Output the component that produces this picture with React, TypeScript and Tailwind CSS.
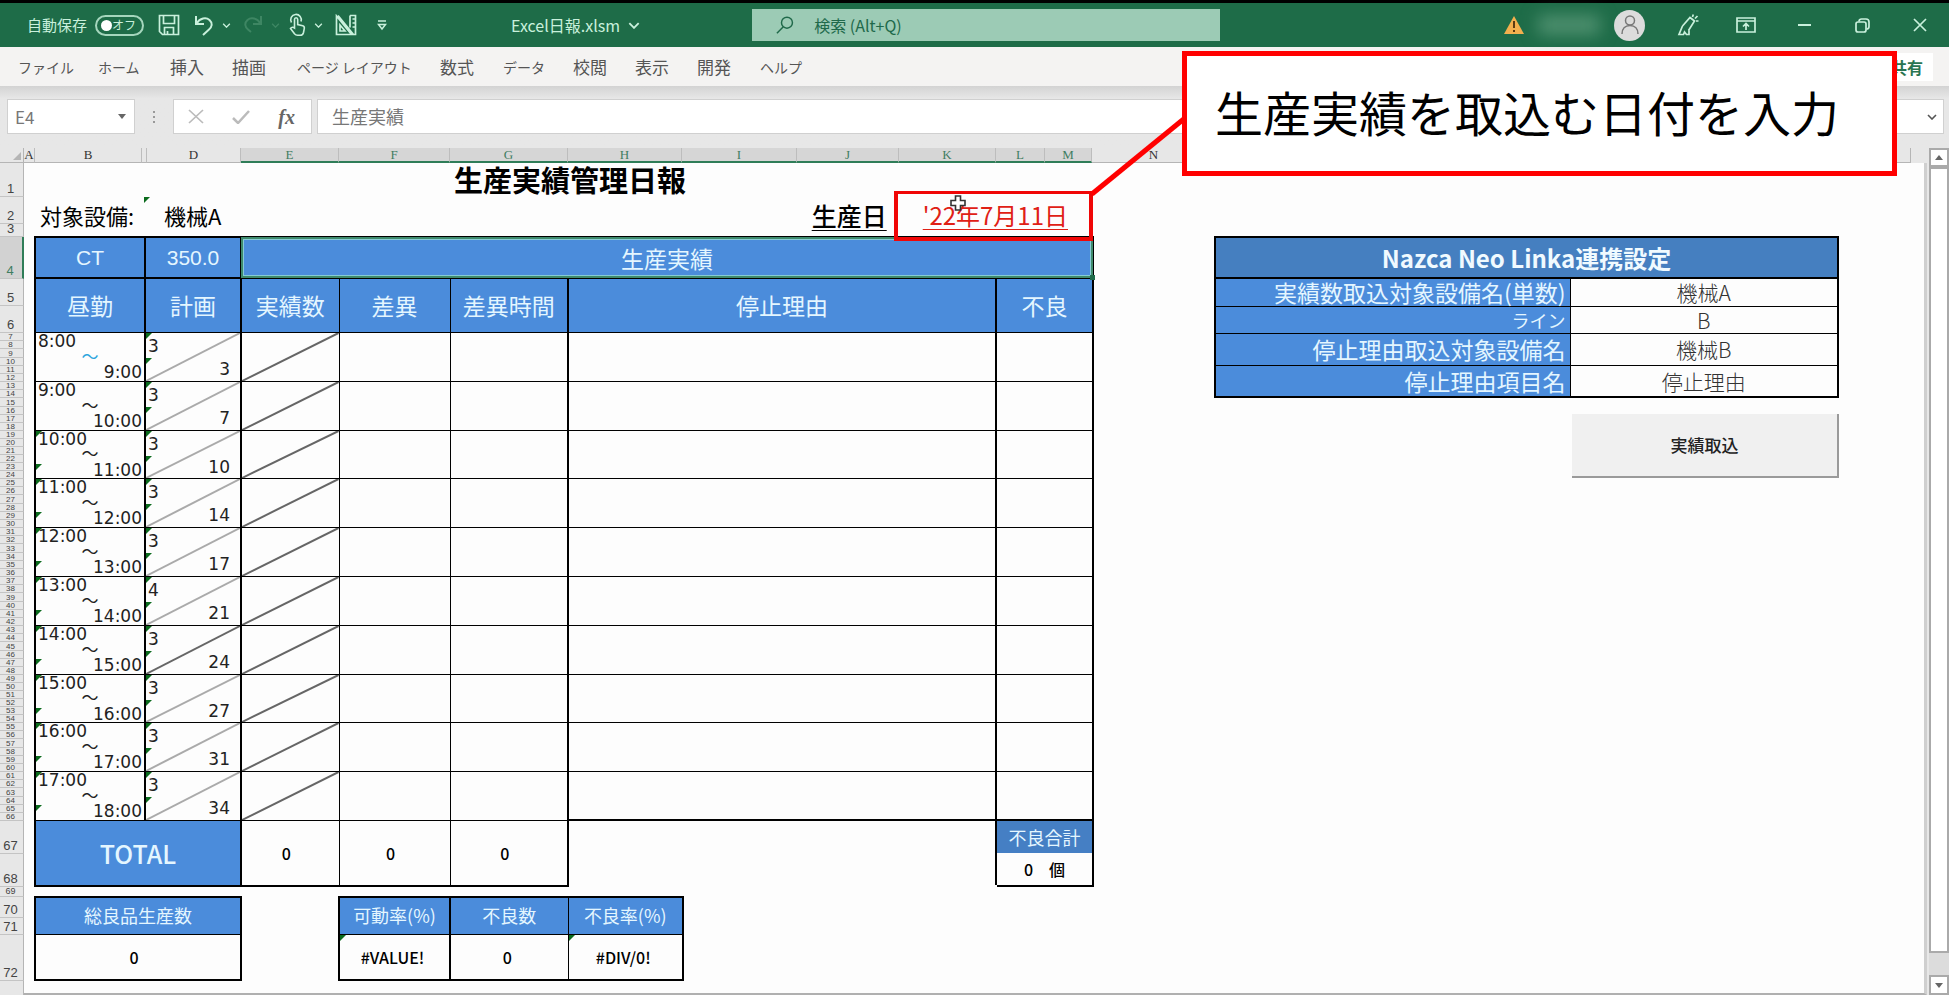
import { useState, type ReactNode } from "react"
import clsx from "clsx"

const TABS = [
  { label: "ファイル", width: "w-20", kana: true },
  { label: "ホーム", width: "w-[72px]", kana: true },
  { label: "挿入", width: "w-[62px]" },
  { label: "描画", width: "w-[65px]" },
  { label: "ページ レイアウト", width: "w-[143px]", kana: true },
  { label: "数式", width: "w-[63px]" },
  { label: "データ", width: "w-[70px]", kana: true },
  { label: "校閲", width: "w-[62px]" },
  { label: "表示", width: "w-[62px]" },
  { label: "開発", width: "w-[63px]" },
  { label: "ヘルプ", width: "w-[60px]", kana: true },
]

const COLUMNS = [
  { name: "A", width: "w-[11px]" },
  { name: "B", width: "w-[107px]" },
  { name: "", width: "w-[5px]" },
  { name: "D", width: "w-[94px]" },
  { name: "E", width: "w-[98px]", active: true },
  { name: "F", width: "w-[111px]", active: true },
  { name: "G", width: "w-[118px]", active: true },
  { name: "H", width: "w-[114px]", active: true },
  { name: "I", width: "w-[115px]", active: true },
  { name: "J", width: "w-[102px]", active: true },
  { name: "K", width: "w-[97px]", active: true },
  { name: "L", width: "w-[49px]", active: true },
  { name: "M", width: "w-[47px]", active: true },
  { name: "N", width: "w-[124px]" },
]

const HOURS = [
  { from: "8:00", to: "9:00", plan: 3, sum: 3, height: "h-[49px]" },
  { from: "9:00", to: "10:00", plan: 3, sum: 7, height: "h-[49px]" },
  { from: "10:00", to: "11:00", plan: 3, sum: 10, height: "h-12" },
  { from: "11:00", to: "12:00", plan: 3, sum: 14, height: "h-[49px]" },
  { from: "12:00", to: "13:00", plan: 3, sum: 17, height: "h-[49px]" },
  { from: "13:00", to: "14:00", plan: 4, sum: 21, height: "h-[49px]" },
  { from: "14:00", to: "15:00", plan: 3, sum: 24, height: "h-[49px]" },
  { from: "15:00", to: "16:00", plan: 3, sum: 27, height: "h-12" },
  { from: "16:00", to: "17:00", plan: 3, sum: 31, height: "h-[49px]" },
  { from: "17:00", to: "18:00", plan: 3, sum: 34, height: "h-[49px]" },
]

const SETTINGS = [
  { label: "実績数取込対象設備名(単数)", value: "機械A", height: "h-7" },
  { label: "ライン", value: "B", height: "h-[27px]", small: true },
  { label: "停止理由取込対象設備名", value: "機械B", height: "h-8" },
  { label: "停止理由項目名", value: "停止理由", height: "h-8" },
]

function Chevron({ className = "h-[5px] w-[9px]" }: { className?: string }) {
  return (
    <svg viewBox="0 0 10 6" className={className} fill="none" stroke="currentColor" strokeWidth="1.6">
      <path d="M1 1l4 4 4-4" />
    </svg>
  )
}

// Green corner that marks a formula warning
function Mark({ className }: { className: string }) {
  return (
    <svg viewBox="0 0 6 6" className={clsx("absolute size-[6px]", className)}>
      <path d="M0 0h6L0 6z" fill="#0b6b1d" />
    </svg>
  )
}

function Slash({ color }: { color: string }) {
  return (
    <svg className="absolute inset-0 size-full" viewBox="0 0 100 50" preserveAspectRatio="none">
      <path d="M0 50L100 0" stroke={color} strokeWidth="2" vectorEffect="non-scaling-stroke" />
    </svg>
  )
}

function TitleBar() {
  const [autosave, setAutosave] = useState(false)
  return (
    <header className="flex h-[47px] items-center border-t-[3px] border-black bg-[#1e6c48] text-[#c9f0dc]">
      <div className="flex w-[752px] shrink-0 items-center pl-[27px]">
        <label className="flex items-center gap-2 text-[15px]">
          自動保存
          <input type="checkbox" className="sr-only" checked={autosave} onChange={() => setAutosave(!autosave)} />
          <span className="flex h-[21px] w-[49px] items-center justify-between rounded-full border-2 border-[#a5d6bd] pr-1.5 pl-1 text-[12px]">
            <span className="size-[11px] rounded-full bg-white" />
            オフ
          </span>
        </label>
        <button aria-label="保存" className="ml-3.5">
          <svg viewBox="0 0 22 22" className="size-[22px]" fill="none" stroke="currentColor" strokeWidth="1.7">
            <path d="M1.5 1.5h19v19h-16l-3-3zM5.5 1.5v8h11v-8M6.5 20.5v-7h9v7M9.5 17v3.500" />
          </svg>
        </button>
        <button aria-label="元に戻す" className="ml-3.5 flex items-center gap-2">
          <svg viewBox="0 0 20 22" className="h-[22px] w-5" fill="none" stroke="currentColor" strokeWidth="2">
            <path d="M2 2v8h8M2.5 9.5C6 4 12 3 15.5 6c3.500 3.200 2.500 7-.5 9.500L9 21" />
          </svg>
          <Chevron />
        </button>
        <button aria-label="やり直し" className="ml-3 flex items-center gap-2 text-[#3e8663]">
          <svg viewBox="0 0 20 22" className="h-[22px] w-5" fill="none" stroke="currentColor" strokeWidth="2">
            <path d="M18 2v8h-8M17.5 9.5C14 4 8 3 4.5 6 1 9.2 2 13 5 15.5L8 18" />
          </svg>
          <Chevron />
        </button>
        <button aria-label="タッチ" className="ml-2 flex items-center gap-2">
          <svg viewBox="0 0 18 24" className="h-6 w-[18px]" fill="none" stroke="currentColor" strokeWidth="1.6">
            <path d="M3.5 9.5a5.300 5.300 0 1 1 9.500-1" />
            <path d="M6.5 15V6.5c0-2.300 3.200-2.300 3.200 0v5l5 1.200c1.300.4 1.800 1.300 1.600 2.600l-.8 4.200c-.4 1.800-1.500 2.800-3.300 2.800H9.500c-1.300 0-2.200-.5-3-1.500l-4-5.300c1-1.500 2.500-1.500 4-.5z" />
          </svg>
          <Chevron />
        </button>
        <button aria-label="デザイン モード" className="ml-3">
          <svg viewBox="0 0 22 22" className="size-[22px]" fill="none" stroke="currentColor" strokeWidth="1.7">
            <path d="M1.5 2v18.500h15zM5 11v6h5zM15 1.500h5.500v19h-2L3 1.500M15 1.500v12M17.500 5h3M17.500 9h3M17.500 13h3" />
          </svg>
        </button>
        <button aria-label="クイック アクセス" className="ml-5">
          <svg viewBox="0 0 10 11" className="h-[11px] w-[10px]" fill="none" stroke="currentColor" strokeWidth="1.5">
            <path d="M1 1h8M1.5 4.500h7L5 9z" />
          </svg>
        </button>
        <button className="mr-[112px] ml-auto flex items-center gap-2 text-[16px]">
          Excel日報.xlsm
          <Chevron className="h-[7px] w-3" />
        </button>
      </div>
      <label className="flex h-8 w-[468px] items-center bg-[#9ccbb5] pl-6 text-[#20694a]">
        <svg viewBox="0 0 20 20" className="mr-5 size-5" fill="none" stroke="currentColor" strokeWidth="1.6">
          <circle cx="12" cy="7.5" r="6" />
          <path d="M8 12l-7 7" />
        </svg>
        <input aria-label="検索" placeholder="検索 (Alt+Q)" className="w-full bg-transparent text-[16px] outline-none placeholder:text-[#20694a]" />
      </label>
      <div className="ml-auto flex shrink-0 items-center">
        <svg viewBox="0 0 20 18" className="h-[18px] w-5">
          <path d="M10 0l10 18H0z" fill="#f3b04e" />
          <path d="M10 5v7M10 14v2" stroke="#5b3b12" strokeWidth="2" />
        </svg>
        <span className="mx-3.5 h-5 w-[62px] bg-[#4d8f6e] blur-sm" />
        <button aria-label="アカウント" className="mr-3.5 flex size-[31px] items-center justify-center rounded-full bg-[#dcdcdc]">
          <svg viewBox="0 0 20 22" className="h-[22px] w-5" fill="none" stroke="#777" strokeWidth="1.5">
            <circle cx="10" cy="6.5" r="4.5" />
            <path d="M2 20c0-5 3-8.500 8-8.500s8 3.500 8 8.500" />
          </svg>
        </button>
        <button aria-label="描画" className="flex w-[58px] justify-center">
          <svg viewBox="0 0 22 22" className="size-[22px]" fill="none" stroke="currentColor" strokeWidth="1.7">
            <path d="M5.5 12L13 3.500l4.500 3.500-6 9.500M5.500 12L2 20.500h4.500l1-2.500 2 2.500h2.500V16.500M15.500 3l.8-2.500M18 4.500L20.500 2M19 7h2.500" />
          </svg>
        </button>
        <button aria-label="リボンの表示" className="flex w-[58px] justify-center">
          <svg viewBox="0 0 20 16" className="h-4 w-5" fill="none" stroke="currentColor" strokeWidth="1.7">
            <path d="M1 1h18v14H1zM1 4h18M10 13V7M7 9.500L10 6.500l3 3" />
          </svg>
        </button>
        <button aria-label="最小化" className="flex w-[58px] justify-center">
          <span className="h-0.5 w-[13px] bg-current" />
        </button>
        <button aria-label="元のサイズ" className="flex w-[58px] justify-center">
          <svg viewBox="0 0 15 15" className="size-[15px]" fill="none" stroke="currentColor" strokeWidth="1.7">
            <rect x="1" y="4" width="10" height="10" rx="2" />
            <path d="M4 3.5C4 2 5 1 6.5 1H11c2 0 3 1 3 3v4.500c0 1.500-1 2.500-2.500 2.500" />
          </svg>
        </button>
        <button aria-label="閉じる" className="flex w-[58px] justify-center">
          <svg viewBox="0 0 14 14" className="size-3.5" fill="none" stroke="currentColor" strokeWidth="1.7">
            <path d="M1 1l12 12M13 1L1 13" />
          </svg>
        </button>
      </div>
    </header>
  )
}

function Ribbon() {
  return (
    <nav className="flex h-[39px] items-center bg-[#f4f3f2] pl-[18px] text-[#555]">
      {TABS.map((tab) => (
        <button
          key={tab.label}
          className={clsx("shrink-0 text-left leading-6 whitespace-nowrap", tab.width, tab.kana ? "text-[14px]" : "text-[17px]")}
        >
          {tab.label}
        </button>
      ))}
      <button className="mr-4 ml-auto h-7 bg-white px-2.5 text-[16px] font-bold text-[#2a7552]">共有</button>
    </nav>
  )
}

function FormulaBar() {
  return (
    <div className="flex h-[62px] items-start bg-linear-to-b from-[#d3d3d3] to-[#e7e7e7] to-20% pt-[13px] pr-[5px] pl-[7px] text-[#777]">
      <div className="flex h-[35px] w-32 items-center border border-[#d0d0d0] bg-white pr-2 pl-[7px]">
        <input aria-label="名前ボックス" defaultValue="E4" className="w-full min-w-0 text-[17px] outline-none" />
        <svg viewBox="0 0 8 5" className="h-[5px] w-2 shrink-0" fill="#666">
          <path d="M0 0h8L4 5z" />
        </svg>
      </div>
      <div className="mx-[18px] flex h-[35px] w-0.5 flex-col justify-center gap-[3px]">
        <span className="h-0.5 bg-[#999]" />
        <span className="h-0.5 bg-[#999]" />
        <span className="h-0.5 bg-[#999]" />
      </div>
      <div className="flex h-[35px] w-[139px] items-center justify-between border border-[#d0d0d0] bg-white pr-4 pl-3.5">
        <button aria-label="キャンセル">
          <svg viewBox="0 0 16 15" className="h-[15px] w-4" fill="none" stroke="#bbb" strokeWidth="1.7">
            <path d="M1 1l14 13M15 1L1 14" />
          </svg>
        </button>
        <button aria-label="入力">
          <svg viewBox="0 0 18 14" className="h-3.5 w-[18px]" fill="none" stroke="#bbb" strokeWidth="2.5">
            <path d="M1 8l5 5L17 1" />
          </svg>
        </button>
        <button className="font-['Liberation_Serif',serif] text-[20px] leading-6 font-bold text-[#666] italic">fx</button>
      </div>
      <div className="ml-[5px] flex h-[35px] flex-1 items-center border border-[#d0d0d0] bg-white pr-1.5 pl-3.5">
        <input aria-label="数式バー" defaultValue="生産実績" className="flex-1 text-[18px] outline-none" />
        <Chevron className="h-[6px] w-[10px] text-[#555]" />
      </div>
    </div>
  )
}

function ColumnHeads() {
  return (
    <div className="flex h-[15px] text-[13px] leading-[14px] text-[#333]">
      {COLUMNS.map((col, i) => (
        <div
          key={i}
          className={clsx(
            "shrink-0 border-r border-r-[#bdbdbd] text-center font-['Liberation_Serif',serif]",
            col.width,
            col.active ? "border-b-2 border-b-[#2f7d58] bg-[#d6d6d6] text-[#3f7d62]" : "border-b border-b-[#b5b5b5]",
          )}
        >
          {col.name}
        </div>
      ))}
      <div className="mr-4 flex-1 border-r border-b border-[#b5b5b5]" />
    </div>
  )
}

function RowHead({ n, className, active }: { n: number; className: string; active?: boolean }) {
  return (
    <div
      className={clsx(
        "flex items-end justify-center border-b border-b-[#c4c4c4] pr-0.5",
        active ? "border-r-2 border-r-[#2f7d58] bg-[#d2d2d2] text-[#3f7d62]" : "border-r border-r-[#b5b5b5] text-[#444]",
        className,
      )}
    >
      {n}
    </div>
  )
}

function RowHeads() {
  return (
    <div className="flex w-6 shrink-0 flex-col bg-[#e7e7e7] font-['Liberation_Sans',sans-serif] text-[13px] leading-[14px]">
      <div className="flex h-[15px] items-end justify-end border-r border-b border-[#b5b5b5] p-0.5">
        <svg viewBox="0 0 8 8" className="size-2" fill="#b5b5b5">
          <path d="M8 0v8H0z" />
        </svg>
      </div>
      <RowHead n={1} className="h-[34px]" />
      <RowHead n={2} className="h-[27px]" />
      <RowHead n={3} className="h-[13px]" />
      <RowHead n={4} className="h-[42px]" active />
      <RowHead n={5} className="h-[27px]" />
      <RowHead n={6} className="h-[27px]" />
      {HOURS.map((hour, g) => (
        <div key={hour.from} className={clsx("flex flex-col text-[8px] leading-[7px]", hour.height)}>
          {[0, 1, 2, 3, 4, 5].map((i) => (
            <RowHead key={i} n={7 + g * 6 + i} className="flex-1" />
          ))}
        </div>
      ))}
      <RowHead n={67} className="h-[33px]" />
      <RowHead n={68} className="h-[33px]" />
      <RowHead n={69} className="h-[10px] text-[9px] leading-[9px]" />
      <RowHead n={70} className="h-[21px]" />
      <RowHead n={71} className="h-[17px]" />
      <RowHead n={72} className="h-[46px]" />
      <div className="flex-1 border-r border-[#b5b5b5]" />
    </div>
  )
}

function Head({ children, className, colSpan }: { children: ReactNode; className?: string; colSpan?: number }) {
  return (
    <th colSpan={colSpan} className={clsx("border-black bg-[#4b8cdb] p-0 font-normal text-[#e4f6ff]", className)}>
      {children}
    </th>
  )
}

function ReportTable() {
  return (
    <table className="w-[1058px] table-fixed border-collapse border-2 border-black text-[23px] leading-7">
      <colgroup>
        <col className="w-[110px]" />
        <col className="w-[96px]" />
        <col className="w-[98px]" />
        <col className="w-[111px]" />
        <col className="w-[118px]" />
        <col className="w-[428px]" />
        <col className="w-[97px]" />
      </colgroup>
      <thead>
        <tr className="h-[41px]">
          <Head className="border-2 font-['Liberation_Sans',sans-serif] text-[21px]">CT</Head>
          <Head className="border-2 font-['Liberation_Sans',sans-serif] text-[21px]">350.0</Head>
          <Head colSpan={5} className="relative border-2">
            生産実績
            {/* Selection frame of the active cell */}
            <div className="absolute -inset-px border-2 border-[#3f8b6d] inset-ring inset-ring-[#86cbd6]" />
            <div className="absolute -right-[3px] -bottom-[3px] size-[5px] bg-[#1f6b49]" />
          </Head>
        </tr>
        <tr className="h-[54px]">
          <Head className="border-x-2 border-b">昼勤</Head>
          <Head className="border-x-2 border-b">計画</Head>
          <Head className="border-r border-b">実績数</Head>
          <Head className="border-r border-b">差異</Head>
          <Head className="border-r-2 border-b">差異時間</Head>
          <Head className="border-r-2 border-b">停止理由</Head>
          <Head className="border-b">不良</Head>
        </tr>
      </thead>
      <tbody className="font-['DejaVu_Sans','Noto_Sans_CJK_JP',sans-serif] text-[17px] text-[#222]">
        {HOURS.map((hour, i) => (
          <tr key={hour.from} className={hour.height}>
            <td className="relative border-r-2 border-b border-black p-0">
              {i > 1 && <Mark className="top-0 left-0" />}
              {i > 1 && <Mark className="top-[33px] left-0" />}
              <div className="flex h-[47px] flex-col justify-between px-0.5 leading-4">
                <span>{hour.from}</span>
                <span className={clsx("text-center leading-3", i === 0 && "text-[#2ea6dd]")}>〜</span>
                <span className="text-right">{hour.to}</span>
              </div>
            </td>
            <td className="relative border-r-2 border-b border-black p-0">
              <Slash color={i === 6 ? "#666" : "#aaa"} />
              <Mark className="top-0 left-0" />
              <Mark className="top-[25px] left-0" />
              <div className="flex h-[47px] flex-col justify-between pt-1 pr-2.5 pb-0.5 pl-0.5 leading-[18px]">
                <span>{hour.plan}</span>
                <span className="text-right">{hour.sum}</span>
              </div>
            </td>
            <td className="relative border-r border-b border-black p-0">
              <Slash color="#666" />
            </td>
            <td className="border-r border-b border-black p-0" />
            <td className="border-r-2 border-b border-black p-0" />
            <td className={clsx("border-r-2 border-black p-0", i === 9 ? "border-b-2" : "border-b")} />
            <td className={clsx("border-black p-0", i === 9 ? "border-b-2" : "border-b")} />
          </tr>
        ))}
      </tbody>
      <tfoot className="text-center text-[16px]">
        <tr className="h-[33px]">
          <th colSpan={2} rowSpan={2} className="border-r-2 border-b-2 border-black bg-[#4b8cdb] p-0 text-[25px] font-medium text-[#e4f6ff]">
            TOTAL
          </th>
          <td rowSpan={2} className="border-r border-b-2 border-black p-0 pr-2 font-medium">0</td>
          <td rowSpan={2} className="border-r border-b-2 border-black p-0 pr-2 font-medium">0</td>
          <td rowSpan={2} className="border-r-2 border-b-2 border-black p-0 pr-2 font-medium">0</td>
          <td rowSpan={2} className="border-r-2 border-b-2 border-r-black border-b-[#fdfdfd] p-0" />
          <th className="bg-[#457fc4] p-0 text-[18px] font-normal text-[#e4f6ff]">不良合計</th>
        </tr>
        <tr className="h-[33px]">
          <td className="border-b-2 border-black p-0 font-medium">0　個</td>
        </tr>
      </tfoot>
    </table>
  )
}

function Report() {
  return (
    <section className="relative ml-[10px] w-[1058px] shrink-0">
      <h1 className="h-[34px] pl-3.5 text-center text-[29px] leading-8 font-bold">生産実績管理日報</h1>
      <div className="relative flex h-[39px] items-center pb-1 pl-1.5 text-[22px] leading-[30px]">
        <Mark className="top-0 left-[110px]" />
        <span className="w-[124px]">対象設備:</span>
        <span>機械A</span>
        <span className="mr-9 ml-auto text-[25px] font-medium underline decoration-1 underline-offset-4">生産日</span>
        <span className="mr-6 text-[24px] text-[#e02015] underline decoration-1 underline-offset-4">'22年7月11日</span>
      </div>
      <div className="absolute top-[28px] -right-px z-10 h-[50px] w-[199px] border-4 border-t-[3px] border-[#f00606]" />
      <svg viewBox="0 0 16 16" className="absolute top-8 right-[126px] size-4">
        <path d="M5.5 1h5v4.500H15v5h-4.500V15h-5v-4.500H1v-5h4.500z" fill="#fff" stroke="#333" strokeWidth="1.6" />
      </svg>

      <ReportTable />

      <div className="mt-[9px] flex">
        <table className="w-[208px] table-fixed border-collapse border-2 border-black text-center text-[16px]">
          <thead>
            <tr className="h-[37px]">
              <Head className="border-b text-[18px]">総良品生産数</Head>
            </tr>
          </thead>
          <tbody>
            <tr className="h-[46px]">
              <td className="p-0 pr-2 font-medium">0</td>
            </tr>
          </tbody>
        </table>
        <table className="ml-[96px] w-[344px] table-fixed border-collapse border-2 border-black text-center text-[16px]">
          <colgroup>
            <col className="w-[111px]" />
            <col className="w-[118px]" />
            <col className="w-[115px]" />
          </colgroup>
          <thead>
            <tr className="h-[37px]">
              <Head className="border-r-2 border-b text-[18px]">可動率(%)</Head>
              <Head className="border-r border-b text-[18px]">不良数</Head>
              <Head className="border-b text-[18px]">不良率(%)</Head>
            </tr>
          </thead>
          <tbody>
            <tr className="h-[46px] font-medium">
              <td className="relative border-r-2 border-black p-0 pr-1">
                <Mark className="top-0 left-0" />
                #VALUE!
              </td>
              <td className="border-r border-black p-0 pr-1">0</td>
              <td className="relative p-0 pr-1">
                <Mark className="top-0 left-0" />
                #DIV/0!
              </td>
            </tr>
          </tbody>
        </table>
      </div>
    </section>
  )
}

function Settings() {
  return (
    <section className="mt-[73px] ml-[124px] flex w-[623px] shrink-0 flex-col items-end">
      <table className="w-full table-fixed border-collapse border-2 border-black text-[23px] leading-[26px]">
        <colgroup>
          <col className="w-[355px]" />
          <col className="w-[268px]" />
        </colgroup>
        <thead>
          <tr className="h-[41px]">
            <th colSpan={2} className="border-b-2 border-black bg-[#457fc0] p-0 text-[24px] font-bold text-[#f0faff]">
              Nazca Neo Linka連携設定
            </th>
          </tr>
        </thead>
        <tbody>
          {SETTINGS.map((row) => (
            <tr key={row.label} className={row.height}>
              <th
                className={clsx(
                  "border-r border-b border-black bg-[#4b8cdb] p-0 pr-1 text-right font-normal text-[#e4f6ff]",
                  row.small && "text-[18px]",
                )}
              >
                {row.label}
              </th>
              <td className="border-b border-black p-0 text-center text-[21px] font-light text-[#333]">{row.value}</td>
            </tr>
          ))}
        </tbody>
      </table>
      <button className="mt-4 h-16 w-[267px] border-r-2 border-b-2 border-[#9a9a9a] bg-[#f0f0f0] text-[17px] font-medium text-[#222]">
        実績取込
      </button>
    </section>
  )
}

function ScrollBar() {
  return (
    <div className="flex w-5 shrink-0 flex-col bg-[#dcdcdc]">
      <button aria-label="上へ" className="flex h-[19px] items-center justify-center border-2 border-[#aaa] bg-white">
        <svg viewBox="0 0 8 5" className="h-[5px] w-2" fill="#666">
          <path d="M0 5h8L4 0z" />
        </svg>
      </button>
      <div className="mb-[22px] flex-1 border-2 border-[#aaa] bg-white" />
      <button aria-label="下へ" className="flex h-5 items-center justify-center border-2 border-[#aaa] bg-white">
        <svg viewBox="0 0 8 5" className="h-[5px] w-2" fill="#666">
          <path d="M0 0h8L4 5z" />
        </svg>
      </button>
    </div>
  )
}

export default function App() {
  return (
    <div className="relative flex min-h-screen flex-col overflow-hidden bg-[#e7e7e7] font-['Noto_Sans_CJK_JP',sans-serif] text-black">
      <TitleBar />
      <Ribbon />
      <FormulaBar />

      <main className="flex flex-1">
        <RowHeads />
        <div className="flex min-w-0 flex-1 flex-col">
          <ColumnHeads />
          <div className="flex flex-1 border-r-[3px] border-b-2 border-r-[#cfcfcf] border-b-[#b0b0b0] bg-[#fdfdfd]">
            <Report />
            <Settings />
          </div>
        </div>
        <div className="w-0.5 shrink-0" />
        <ScrollBar />
      </main>

      {/* Callout that points at the date cell */}
      <svg viewBox="0 0 96 80" className="absolute top-[116px] left-[1091px] z-10 h-20 w-24">
        <path d="M1 78L94 2" stroke="#f00" strokeWidth="5" />
      </svg>
      <div className="absolute top-[51px] left-[1182px] z-10 flex h-[125px] w-[715px] items-center border-[5px] border-[#f00] bg-white pb-1.5 pl-7 text-[48px] whitespace-nowrap">
        生産実績を取込む日付を入力
      </div>
    </div>
  )
}
